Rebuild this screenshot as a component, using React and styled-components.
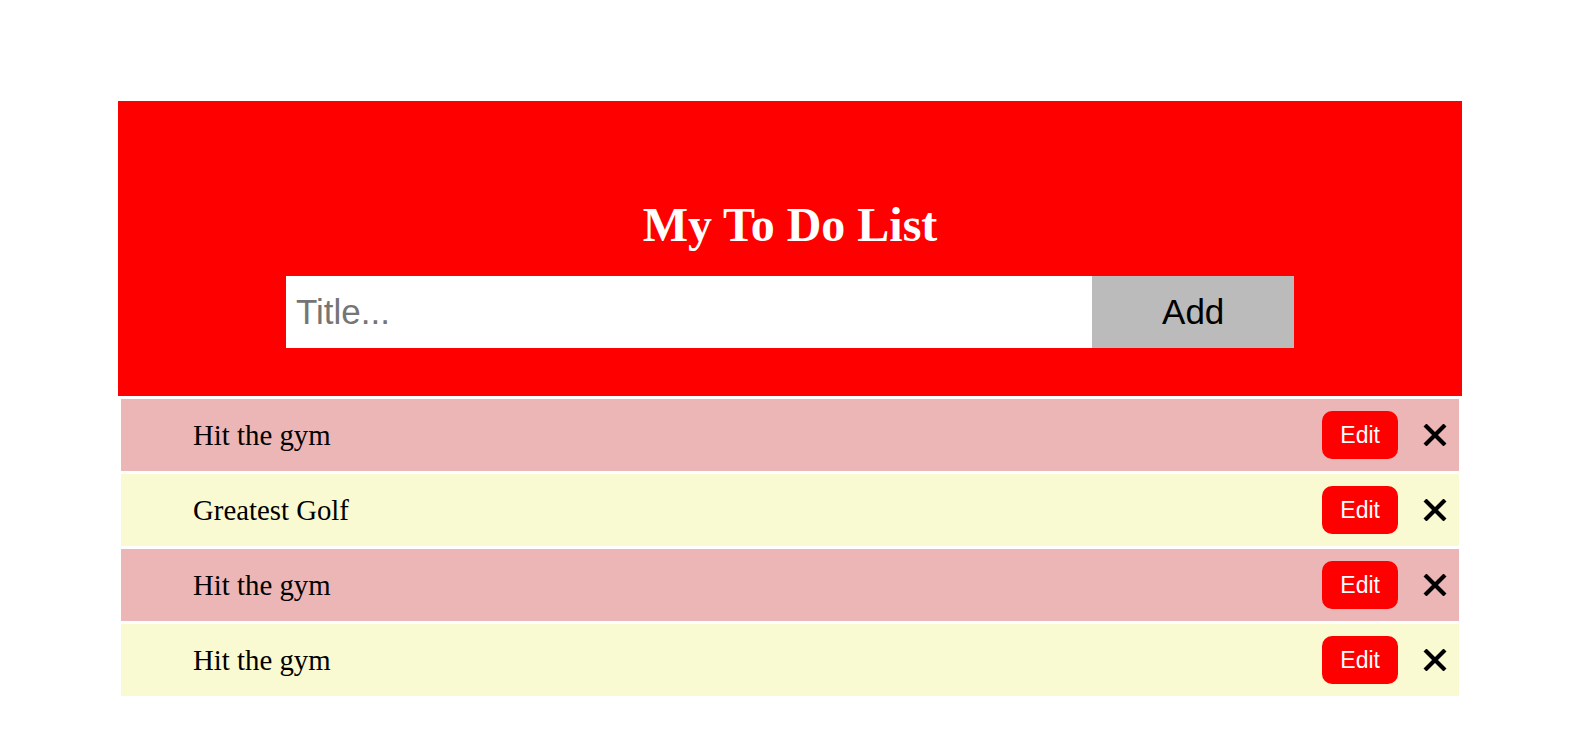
import React, { useState } from 'react'
import styled, { createGlobalStyle } from 'styled-components'

const GlobalStyle = createGlobalStyle`
  body {
    margin: 0;
    background: #ffffff;
    font-family: "Liberation Serif", "Times New Roman", serif;
  }
`

const Page = styled.div`
  padding-top: 101px;
`

const Container = styled.div`
  width: 1344px;
  margin: 0 0 0 118px;
`

const Header = styled.div`
  background: #ff0000;
  padding: 98px 0 48px;
  display: flex;
  flex-direction: column;
  align-items: center;
`

const Title = styled.h1`
  margin: 0 0 26px;
  color: #ffffff;
  font-family: "Liberation Serif", "Times New Roman", serif;
  font-size: 48px;
  font-weight: bold;
  line-height: 51px;
`

const Form = styled.div`
  display: flex;
  width: 1008px;
  height: 72px;
`

const TitleInput = styled.input`
  width: 80%;
  border: none;
  outline: none;
  margin: 0;
  padding: 0 10px;
  box-sizing: border-box;
  font-family: "Liberation Sans", Arial, sans-serif;
  font-size: 35px;
  color: #000;
  background: #ffffff;

  &::placeholder {
    color: #757575;
  }
`

const AddButton = styled.button`
  width: 20%;
  border: none;
  margin: 0;
  padding: 0;
  background: #bbbbbb;
  color: #000;
  font-family: "Liberation Sans", Arial, sans-serif;
  font-size: 35px;
  cursor: pointer;
`

const List = styled.ul`
  list-style: none;
  margin: 0;
  padding: 3px 3px 0;
`

const Row = styled.li`
  display: flex;
  align-items: center;
  height: 72px;
  margin-bottom: 3px;
  padding: 0 12px 0 72px;
  background: ${props => (props.$odd ? '#fafad2' : '#ecb6b6')};
`

const Text = styled.span`
  flex: 1;
  font-family: "Liberation Serif", "Times New Roman", serif;
  font-size: 28.8px;
  color: #000;
`

const EditButton = styled.button`
  height: 48px;
  padding: 0 18px;
  border: none;
  border-radius: 10px;
  background: #ff0000;
  color: #ffffff;
  font-family: "Liberation Sans", Arial, sans-serif;
  font-size: 23px;
  cursor: pointer;
`

const Remove = styled.span`
  display: flex;
  margin-left: 25px;
  cursor: pointer;
`

const CloseIcon = () => (
  <svg width="24" height="22" viewBox="0 0 24 22">
    <path d="M2 1 L22 21 M22 1 L2 21" stroke="#000" strokeWidth="4.2" fill="none" />
  </svg>
)

export default function App() {
  const [title, setTitle] = useState('')
  const [items] = useState(['Hit the gym', 'Greatest Golf', 'Hit the gym', 'Hit the gym'])

  return (
    <Page>
      <GlobalStyle />
      <Container>
        <Header>
          <Title>My To Do List</Title>
          <Form>
            <TitleInput
              type="text"
              placeholder="Title..."
              value={title}
              onChange={e => setTitle(e.target.value)}
            />
            <AddButton>Add</AddButton>
          </Form>
        </Header>
        <List>
          {items.map((item, i) => (
            <Row key={i} $odd={i % 2 === 1}>
              <Text>{item}</Text>
              <EditButton>Edit</EditButton>
              <Remove>
                <CloseIcon />
              </Remove>
            </Row>
          ))}
        </List>
      </Container>
    </Page>
  )
}
